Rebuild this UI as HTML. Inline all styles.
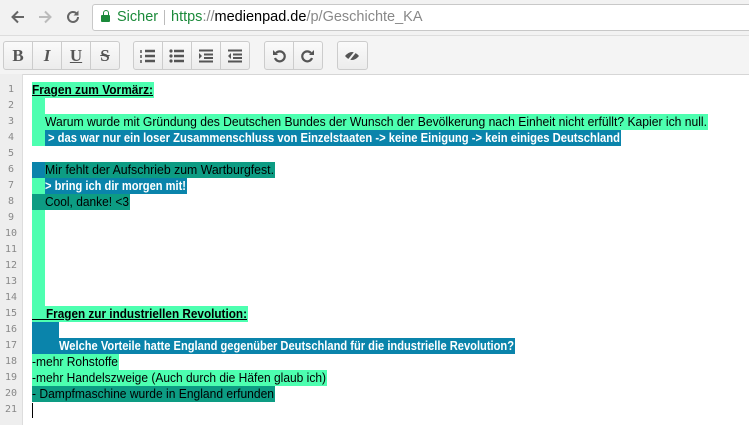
<!DOCTYPE html><html><head><meta charset="utf-8"><style>
body{margin:0;width:749px;height:425px;overflow:hidden;background:#fff;font-family:"Liberation Sans",sans-serif;position:relative}
.chrome{position:absolute;left:0;top:0;width:749px;height:35px;background:#f2f2f2}
.url{position:absolute;left:92px;top:4px;width:670px;height:25px;background:#fff;border:1px solid #c8c8c8;border-radius:3px;font-size:14.5px;line-height:25px}
.tb{position:absolute;left:0;top:35px;width:749px;height:38px;background:#f4f4f4;border-top:1px solid #ddd;border-bottom:1px solid #d6d6d6}
.grp{position:absolute;top:5px;height:27px;border:1px solid #ccc;border-radius:3px;background:linear-gradient(#fafafa,#ececec);display:flex}
.grp div{width:28px;border-right:1px solid #ccc;display:flex;align-items:center;justify-content:center;font-family:"Liberation Serif",serif;font-size:17px;font-weight:bold;color:#555}
.grp div:last-child{border-right:none}
.gut{position:absolute;left:0;top:74px;width:22px;height:351px;background:#eee;border-right:1px solid #ddd}
.ln{position:absolute;left:0;width:22px;text-align:center;font-size:10px;color:#888;font-family:"DejaVu Sans Mono",monospace}
.r{position:absolute;height:16px;line-height:16px;font-size:13px;white-space:pre;color:#000}
.r span{display:inline-block;transform-origin:0 50%}
.g{background:#4dffb0}.b{background:#0a84ab;color:#fff;font-weight:bold}.t{background:#0d9c83}
.h,.h span{font-weight:bold;text-decoration:underline}
</style></head><body>
<div class="chrome">
<svg style="position:absolute;left:9px;top:8px" width="18" height="18" viewBox="0 0 18 18"><path d="M15 9H4M9 3.5L3.5 9 9 14.5" stroke="#666" stroke-width="2" fill="none"/></svg>
<svg style="position:absolute;left:36px;top:8px" width="18" height="18" viewBox="0 0 18 18"><path d="M3 9h11M9 3.5L14.5 9 9 14.5" stroke="#bbb" stroke-width="2" fill="none"/></svg>
<svg style="position:absolute;left:64px;top:8px" width="18" height="18" viewBox="0 0 18 18"><path d="M14 9a5 5 0 1 1-1.5-3.6" stroke="#666" stroke-width="2" fill="none"/><path d="M14.5 2.5v5h-5z" fill="#666"/></svg>
<div class="url"><span style="position:absolute;left:8px;top:10px;width:9px;height:7px;background:#1b8a3a;border-radius:1px"></span><span style="position:absolute;left:10px;top:5px;width:4px;height:5px;border:1.5px solid #1b8a3a;border-bottom:none;border-radius:3px 3px 0 0"></span><span style="position:absolute;left:24px;color:#1b8a3a">Sicher</span><span style="position:absolute;left:71px;top:5px;width:1px;height:15px;background:#bbb"></span><span style="position:absolute;left:78px"><span style="color:#1b8a3a">https</span><span style="color:#888">://</span><span style="color:#000">medienpad.de</span><span style="color:#888">/p/Geschichte_KA</span></span></div>
</div>
<div class="tb">
<div class="grp" style="left:3px"><div>B</div><div style="font-style:italic">I</div><div style="text-decoration:underline">U</div><div style="text-decoration:line-through">S</div></div>
<div class="grp" style="left:133px">
<div><svg width="16" height="14"><path d="M5 2h10M5 7h10M5 12h10" stroke="#555" stroke-width="2.5"/><path d="M1 1v3M1 6v3M1 11v3" stroke="#555" stroke-width="1.5"/></svg></div>
<div><svg width="16" height="14"><path d="M5 2h10M5 7h10M5 12h10" stroke="#555" stroke-width="2.5"/><circle cx="2" cy="2" r="1.6" fill="#555"/><circle cx="2" cy="7" r="1.6" fill="#555"/><circle cx="2" cy="12" r="1.6" fill="#555"/></svg></div>
<div><svg width="16" height="14"><path d="M1 1.5h14M6 5.5h9M6 9h9M1 12.5h14" stroke="#555" stroke-width="2"/><path d="M1 4l3 3-3 3z" fill="#555"/></svg></div>
<div><svg width="16" height="14"><path d="M1 1.5h14M6 5.5h9M6 9h9M1 12.5h14" stroke="#555" stroke-width="2"/><path d="M4 4L1 7l3 3z" fill="#555"/></svg></div>
</div>
<div class="grp" style="left:264px">
<div><svg width="14" height="14"><path d="M4 4a5 5 0 1 1-1 5" stroke="#555" stroke-width="2.2" fill="none"/><path d="M1 1v5h5z" fill="#555"/></svg></div>
<div><svg width="14" height="14"><path d="M10 4a5 5 0 1 0 1 5" stroke="#555" stroke-width="2.2" fill="none"/><path d="M13 1v5H8z" fill="#555"/></svg></div>
</div>
<div class="grp" style="left:337px;width:29px"><div><svg width="16" height="12"><path d="M1 6Q8 -2 15 6Q8 14 1 6z" fill="#555"/><path d="M4 11L12 1" stroke="#f4f4f4" stroke-width="2"/></svg></div></div>
</div>
<div class="gut"></div>
<div id="c"></div>
<div style="position:absolute;left:32px;top:95px;width:1px;height:1px"></div>
<div style="position:absolute;left:32px;top:319px;width:14px;height:1px;background:#000"></div>
<script>
var L=[
[1,[[32,122,'g h','Fragen zum Vormärz:',0]]],
[2,[[32,13,'g','',0]]],
[3,[[32,676,'g','Warum wurde mit Gründung des Deutschen Bundes der Wunsch der Bevölkerung nach Einheit nicht erfüllt? Kapier ich null.',13]]],
[4,[[32,13,'g','',0],[45,576,'b','> das war nur ein loser Zusammenschluss von Einzelstaaten -> keine Einigung -> kein einiges Deutschland',3]]],
[5,[]],
[6,[[32,13,'b','',0],[45,230,'t','Mir fehlt der Aufschrieb zum Wartburgfest.',0]]],
[7,[[32,13,'g','',0],[45,142,'b','> bring ich dir morgen mit!',0]]],
[8,[[32,98,'t','Cool, danke! <3',13]]],
[9,[[32,13,'g','',0]]],[10,[[32,13,'g','',0]]],[11,[[32,13,'g','',0]]],[12,[[32,13,'g','',0]]],[13,[[32,13,'g','',0]]],[14,[[32,13,'g','',0]]],
[15,[[32,216,'g h','Fragen zur industriellen Revolution:',14]]],
[16,[[32,27,'b','',0]]],
[17,[[32,483,'b','Welche Vorteile hatte England gegenüber Deutschland für die industrielle Revolution?',27]]],
[18,[[32,87,'g','-mehr Rohstoffe',0]]],
[19,[[32,295,'g','-mehr Handelszweige (Auch durch die Häfen glaub ich)',0]]],
[20,[[32,243,'t','- Dampfmaschine wurde in England erfunden',0]]],
[21,[]]];
var c=document.getElementById('c');
L.forEach(function(l){var y=82+(l[0]-1)*16;var n=document.createElement('div');n.className='ln';n.style.top=(y+2)+'px';n.textContent=l[0];c.appendChild(n);
l[1].forEach(function(s){var d=document.createElement('div');d.className='r '+s[2];d.style.left=s[0]+'px';d.style.top=y+'px';d.style.width=s[1]+'px';
if(s[3]!==''){var sp=document.createElement('span');sp.textContent=s[3];d.style.paddingLeft=s[4]+'px';d.style.width=(s[1]-s[4])+'px';d.appendChild(sp);c.appendChild(d);
var w=sp.getBoundingClientRect().width;var k=(s[1]-s[4]-1)/w;sp.style.transform='scaleX('+k+')';}
else{c.appendChild(d);}});});
var cur=document.createElement('div');cur.style.cssText='position:absolute;left:32px;top:403px;width:1px;height:15px;background:#000';c.appendChild(cur);
</script>
</body></html>
